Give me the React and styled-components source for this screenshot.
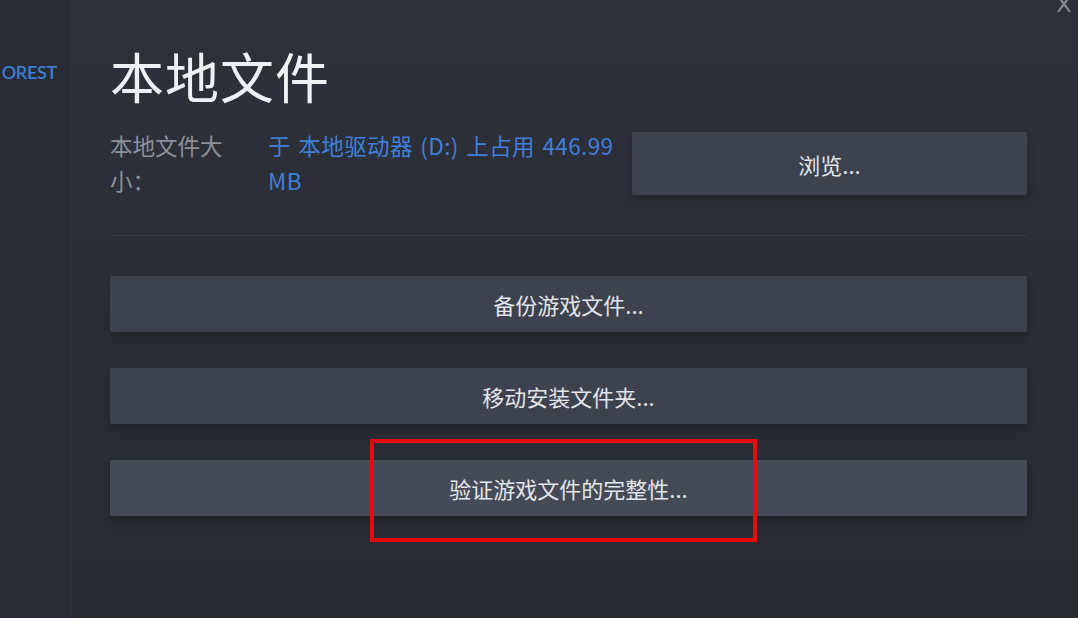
import styled, { createGlobalStyle } from "styled-components";

const GlobalStyle = createGlobalStyle`
    html, body {
        margin: 0;
        padding: 0;
        background: #2a2d35;
    }
    body {
        font-family: "Noto Sans CJK SC", "Noto Sans", sans-serif;
    }
`;

const Page = styled.div`
    display: flex;
    width: 1078px;
    height: 618px;
    overflow: hidden;
    position: relative;
`;

const Sidebar = styled.aside`
    flex: 0 0 72px;
    background: #282b33;
    border-right: 1px solid #2c3039;
    display: flex;
    justify-content: flex-end;
    align-items: flex-start;
    overflow: hidden;
    padding-top: 57px;
    box-sizing: border-box;
`;

const GameName = styled.span`
    font-family: Lato, "Liberation Sans", sans-serif;
    font-size: 18px;
    font-weight: 600;
    letter-spacing: -0.3px;
    color: #3b7ed8;
    white-space: nowrap;
    padding-right: 14px;
    line-height: 30px;
`;

const Main = styled.main`
    flex: 1 1 auto;
    background: linear-gradient(180deg, #2e313a 0%, #2a2d36 60%, #272a31 100%);
    padding: 38px 51px 0 38px;
    display: flex;
    flex-direction: column;
`;

const Title = styled.h1`
    margin: 0;
    font-size: 54px;
    font-weight: 400;
    line-height: 76px;
    color: #eef0f3;
    letter-spacing: 1px;
`;

const SizeRow = styled.div`
    display: flex;
    align-items: flex-start;
    margin-top: 14px;
`;

const SizeLabel = styled.div`
    flex: 0 0 124px;
    font-size: 22.5px;
    line-height: 35px;
    color: #8b909a;
    margin-right: 34px;
`;

const SizeValue = styled.div`
    flex: 0 0 352px;
    font-size: 22.5px;
    line-height: 35px;
    letter-spacing: 0.4px;
    word-spacing: 2px;
    color: #3f7fdc;
    margin-right: 12px;
`;

const ActionButton = styled.button`
    display: flex;
    align-items: center;
    justify-content: center;
    border: none;
    border-radius: 2px;
    background: ${(props) => (props.$highlight ? "#454a57" : "#3d424e")};
    color: #e2e5ea;
    font-family: "Noto Sans CJK SC", "Noto Sans", sans-serif;
    font-size: 22px;
    height: ${(props) => props.$height || 56}px;
    box-shadow: 0 6px 10px rgba(0, 0, 0, 0.22);
    padding: 0;
    position: relative;
`;

const BrowseButton = styled(ActionButton)`
    flex: 1 1 auto;
    margin-top: 4px;
`;

const Divider = styled.hr`
    border: none;
    height: 1px;
    background: #363a44;
    margin: 37px 0 40px 0;
`;

const ButtonList = styled.div`
    display: flex;
    flex-direction: column;
    gap: 36px;
`;

const Mark = styled.span`
    position: absolute;
    left: 260px;
    top: -21px;
    width: 387px;
    height: 103px;
    border: 4px solid #e30b0b;
    box-sizing: border-box;
    pointer-events: none;
`;

const Close = styled.span`
    position: absolute;
    right: 6px;
    top: -6px;
    width: 16px;
    height: 20px;
    color: #8d929c;
`;

function App() {
    return (
        <>
            <GlobalStyle />
            <Page>
                <Sidebar>
                    <GameName>OREST</GameName>
                </Sidebar>
                <Main>
                    <Title>本地文件</Title>
                    <SizeRow>
                        <SizeLabel>本地文件大小：</SizeLabel>
                        <SizeValue>于 本地驱动器 (D:) 上占用 446.99 MB</SizeValue>
                        <BrowseButton $height={63}>浏览...</BrowseButton>
                    </SizeRow>
                    <Divider />
                    <ButtonList>
                        <ActionButton>备份游戏文件...</ActionButton>
                        <ActionButton>移动安装文件夹...</ActionButton>
                        <ActionButton $highlight>
                            验证游戏文件的完整性...
                            <Mark />
                        </ActionButton>
                    </ButtonList>
                </Main>
                <Close>
                    <svg width="16" height="20" viewBox="0 0 16 20">
                        <path
                            d="M2 2 L14 18 M14 2 L2 18"
                            stroke="currentColor"
                            strokeWidth="2"
                            fill="none"
                        />
                    </svg>
                </Close>
            </Page>
        </>
    );
}

export default App;
